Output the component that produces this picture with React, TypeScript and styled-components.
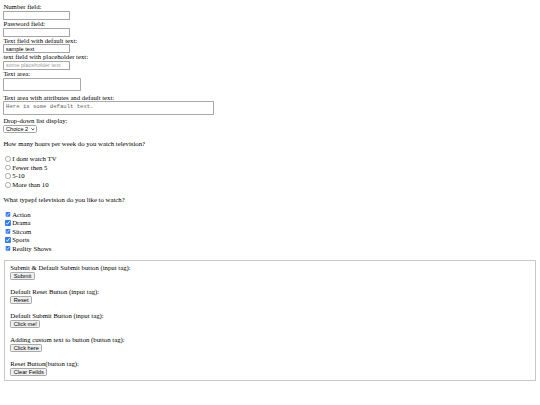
import React from 'react';
import styled, { createGlobalStyle } from 'styled-components';

const GlobalStyle = createGlobalStyle`
  html, body {
    margin: 0;
    background: #ffffff;
  }
`;

// the whole form is laid out at desktop size and shrunk down
const Page = styled.div`
  zoom: 0.421875;
  padding: 8px;
  font-family: "Liberation Serif", "Times New Roman", serif;
  font-size: 16px;
  color: #000;
`;

const Label = styled.div`
  line-height: 18.4px;
  white-space: nowrap;
`;

const Field = styled.input`
  display: block;
  box-sizing: border-box;
  width: 159px;
  height: 21px;
  margin: 0;
  padding: 1px 3px;
  border: 1px solid #a4a4a4;
  border-radius: 2px;
  font-family: "Liberation Sans", Arial, sans-serif;
  font-size: 13.33px;
  color: #000;
  outline: none;

  &::placeholder {
    color: #a0a0a0;
  }
`;

// light corner grip drawn with gradients instead of the native one
const TextArea = styled.textarea<{ $wide?: boolean }>`
  display: block;
  box-sizing: border-box;
  width: ${({ $wide }) => ($wide ? '500px' : '183px')};
  height: 32px;
  margin: 0 0 6px;
  padding: 2px 4px;
  border: 1px solid #a8a8a8;
  border-radius: 2px;
  background:
    linear-gradient(135deg, transparent 0 70%, #9a9a9a 70% 76%, transparent 76% 84%, #9a9a9a 84% 90%, transparent 90%)
    right 1px bottom 1px / 9px 9px no-repeat,
    #fff;
  font-family: "Liberation Mono", "Courier New", monospace;
  font-size: 13.33px;
  color: #666;
  resize: none;
  outline: none;
`;

const SelectWrap = styled.div`
  display: flex;
  align-items: center;
  width: 80px;
  height: 19px;
`;

const Select = styled.select`
  appearance: none;
  box-sizing: border-box;
  width: 80px;
  height: 19px;
  margin: 0;
  padding: 0 16px 0 4px;
  border: 1px solid #a6a6a6;
  border-radius: 4px;
  background: #fff;
  font-family: "Liberation Sans", Arial, sans-serif;
  font-size: 13.33px;
  color: #000;
`;

const Chevron = styled.svg`
  flex: none;
  margin-left: -15px;
  pointer-events: none;
`;

const Question = styled.p`
  margin: 16px 0;
  line-height: 18.4px;
`;

const Options = styled.div<{ $row: number }>`
  display: grid;
  grid-auto-rows: ${({ $row }) => $row}px;
`;

const Option = styled.label`
  display: flex;
  align-items: center;
  line-height: 18.4px;
`;

const Radio = styled.input`
  appearance: none;
  box-sizing: border-box;
  width: 13px;
  height: 13px;
  margin: 0 3px 0 5px;
  border: 1px solid #a9a9a9;
  border-radius: 50%;
  background: #fff;
`;

const Check = styled.input`
  width: 13px;
  height: 13px;
  margin: 0 3px 0 5px;
  accent-color: #2f7bf6;
`;

const Spacer = styled.div`
  height: 18.4px;
`;

const Box = styled.fieldset`
  margin: 0 2px;
  padding: 6px 12px 10px;
  border: 2px groove #c8c8c8;
`;

const Group = styled.div`
  & + & {
    margin-top: 18.4px;
  }
`;

const ButtonRow = styled.div`
  display: flex;
  align-items: center;
  height: 20px;
`;

const Btn = styled.button`
  box-sizing: border-box;
  height: 19px;
  padding: 0 6px;
  background: #efefef;
  border: 1px solid #a8a8a8;
  border-radius: 3px;
  font-family: "Liberation Sans", Arial, sans-serif;
  font-size: 13.33px;
  color: #000;
`;

const hours = ['I dont watch TV', 'Fewer then 5', '5-10', 'More than 10'];
const genres = ['Action', 'Drama', 'Sitcom', 'Sports', 'Reality Shows'];

const buttons: { label: string; text: string; type: 'submit' | 'reset' }[] = [
  { label: 'Submit & Default Submit button (input tag):', text: 'Submit', type: 'submit' },
  { label: 'Default Reset Button (input tag):', text: 'Reset', type: 'reset' },
  { label: 'Default Submit Button (input tag):', text: 'Click me!', type: 'submit' },
  { label: 'Adding custom text to button (button tag):', text: 'Click here', type: 'submit' },
  { label: 'Reset Button(button tag):', text: 'Clear Feilds', type: 'reset' },
];

export default function App() {
  return (
    <>
      <GlobalStyle />
      <Page>
        <form onSubmit={(e) => e.preventDefault()}>
          <Label>Number field:</Label>
          <Field type="number" />
          <Label>Password field:</Label>
          <Field type="password" />
          <Label>Text field with default text:</Label>
          <Field type="text" defaultValue="sample text" />
          <Label>text field with placeholder text:</Label>
          <Field type="text" placeholder="some placeholder text" />
          <Label>Text area:</Label>
          <TextArea />
          <Label>Text area with attributes and default text:</Label>
          <TextArea $wide defaultValue="Here is some default text." />
          <Label>Drop-down list display:</Label>
          <SelectWrap>
            <Select defaultValue="2">
              <option value="1">Choice 1</option>
              <option value="2">Choice 2</option>
              <option value="3">Choice 3</option>
            </Select>
            <Chevron width="9" height="6" viewBox="0 0 9 6">
              <path d="M1 1l3.5 3.5L8 1" fill="none" stroke="#111" strokeWidth="1.8" />
            </Chevron>
          </SelectWrap>

          <Question>How many hours per week do you watch television?</Question>
          <Options $row={20.6}>
            {hours.map((h) => (
              <Option key={h}>
                <Radio type="radio" name="hours" />
                {h}
              </Option>
            ))}
          </Options>

          <Question>What typepf television do you like to watch?</Question>
          <Options $row={20}>
            {genres.map((g) => (
              <Option key={g}>
                <Check type="checkbox" defaultChecked />
                {g}
              </Option>
            ))}
          </Options>
          <Spacer />

          <Box>
            {buttons.map((b) => (
              <Group key={b.label}>
                <Label>{b.label}</Label>
                <ButtonRow>
                  <Btn type={b.type}>{b.text}</Btn>
                </ButtonRow>
              </Group>
            ))}
          </Box>
        </form>
      </Page>
    </>
  );
}
